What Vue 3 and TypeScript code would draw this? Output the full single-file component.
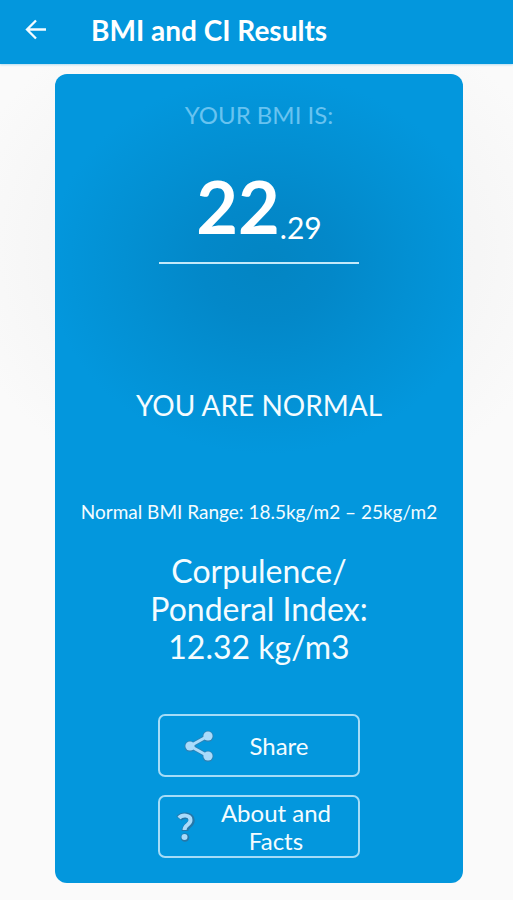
<script setup lang="ts">
const result = {
  whole: '22',
  fraction: '.29',
  verdict: 'YOU ARE NORMAL',
  range: 'Normal BMI Range: 18.5kg/m2 – 25kg/m2',
}
const indexLines: string[] = ['Corpulence/', 'Ponderal Index:', '12.32 kg/m3']
</script>

<template>
  <div class="screen">
    <header class="bar">
      <button class="back" type="button" aria-label="Back">
        <svg viewBox="0 0 24 24" width="24" height="24" fill="none" stroke="currentColor" stroke-width="2.300">
          <path d="M22 11.500H3M12 2.500 3 11.500l9 9" />
        </svg>
      </button>
      <h1 class="title">BMI and CI Results</h1>
    </header>

    <main class="card">
      <h2 class="label">YOUR BMI IS:</h2>
      <p class="value"><span class="whole">{{ result.whole }}</span><span class="fraction">{{ result.fraction }}</span></p>
      <p class="verdict">{{ result.verdict }}</p>
      <p class="range">{{ result.range }}</p>
      <p class="index"><span v-for="line in indexLines" :key="line" class="index-line">{{ line }}</span></p>
      <div class="actions">
        <button class="action" type="button">
          <svg class="icon" viewBox="0 0 32 32" width="32" height="32" aria-hidden="true">
            <path d="M24 6 6 16l18 10" fill="none" stroke="#2f82b4" stroke-width="4.500" />
            <g fill="#2f82b4">
              <circle cx="24" cy="6.300" r="5.500" /><circle cx="6" cy="16.300" r="5.500" /><circle cx="24" cy="26.300" r="5.500" />
            </g>
            <path d="M24 6 6 16l18 10" fill="none" stroke="#a9dbfb" stroke-width="3" />
            <g fill="#a9dbfb">
              <circle cx="24" cy="6" r="4.600" /><circle cx="6" cy="16" r="4.600" /><circle cx="24" cy="26" r="4.600" />
            </g>
          </svg>
          <span class="caption">Share</span>
        </button>
        <button class="action about" type="button">
          <svg class="icon" viewBox="0 0 20 32" width="20" height="32" aria-hidden="true">
            <path d="M3 7.500C6 3.500 15.500 3.500 15.500 9.500c0 5-6.500 4.500-6.500 10.500" fill="none" stroke="#2677a8" stroke-width="6.500" />
            <circle cx="9" cy="26.500" r="4.300" fill="#2677a8" />
            <path d="M3 7C6 3.500 14.500 3.500 14.500 9c0 5-6 4.500-6 10" fill="none" stroke="#a9dbfb" stroke-width="4" />
            <circle cx="8.500" cy="26" r="3" fill="#a9dbfb" />
          </svg>
          <span class="caption">About and Facts</span>
        </button>
      </div>
    </main>
  </div>
</template>

<style>
body {
  margin: 0;
  background: #fafafa;
}
</style>

<style scoped>
.screen {
  min-height: 100vh;
  box-sizing: border-box;
  padding-bottom: 17px;
  color: #f4fcff;
  font-family: Lato, "Open Sans", sans-serif;
  background: radial-gradient(ellipse 310px 260px at 51% 250px, #f2f2f2 0%, #f6f6f6 70%, #fafafa 100%);
}
.bar {
  display: flex;
  align-items: center;
  gap: 43px;
  height: 64px;
  box-sizing: border-box;
  padding: 0 24px 4px;
  background: #0397dd;
  box-shadow: 0 1px 2px #b5dcef;
}
.back {
  display: flex;
  padding: 0;
  border: 0;
  background: none;
  color: inherit;
}
.title {
  margin: 0;
  font-size: 28px;
  line-height: 32px;
  font-weight: 700;
  color: #fff;
}
.card {
  display: flex;
  flex-direction: column;
  align-items: center;
  margin: 10px 50px 0 55px;
  padding: 26px 20px 25px;
  border-radius: 12px;
  text-align: center;
  background: radial-gradient(ellipse 220px 190px at 52% 190px, #0385c3 0%, #0388c9 30%, #0390d3 65%, #0397dd 100%);
}
.label {
  margin: 0;
  font-size: 24px;
  line-height: 30px;
  font-weight: 400;
  color: #68c3f0;
}
.value {
  display: flex;
  justify-content: center;
  align-items: flex-end;
  width: 200px;
  height: 96px;
  box-sizing: border-box;
  padding-bottom: 12px;
  margin: 38px 0 0;
  border-bottom: 2px solid #c3e9fa;
  color: #fff;
}
.whole {
  font-size: 72px;
  line-height: 88px;
  font-weight: 700;
}
.fraction {
  font-size: 30px;
  line-height: 46px;
}
.verdict {
  margin: 122px 0 0;
  font-size: 28px;
  line-height: 38px;
}
.range {
  margin: 76px 0 0;
  font-size: 19px;
  line-height: 24px;
  white-space: nowrap;
}
.index {
  margin: 28px 0 0;
  font-size: 32px;
  line-height: 38px;
}
.index-line {
  display: block;
}
.actions {
  display: grid;
  gap: 18px;
  width: 202px;
  margin-top: 48px;
}
.action {
  display: flex;
  align-items: center;
  min-height: 63px;
  padding: 0 24px;
  border: 2px solid #a5dcf7;
  border-radius: 7px;
  background: none;
  color: inherit;
  font-family: inherit;
  font-size: 24px;
  line-height: 28px;
}
.action.about {
  padding: 0 16px;
}
.icon {
  flex: none;
}
.caption {
  flex: 1;
  padding-left: 8px;
}
.about .caption {
  padding-left: 14px;
}
</style>
